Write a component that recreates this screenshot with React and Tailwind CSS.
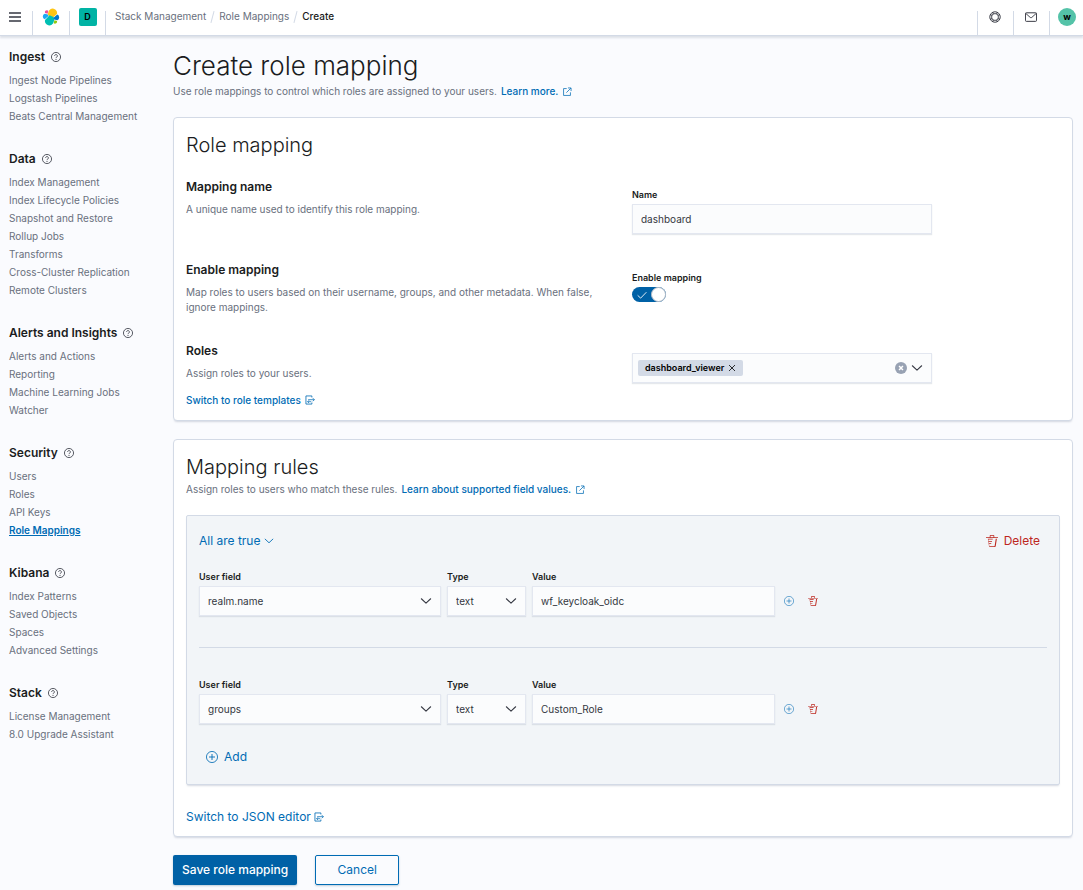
import { useState } from "react";

const NAV_SECTIONS = [
  {
    title: "Ingest",
    items: ["Ingest Node Pipelines", "Logstash Pipelines", "Beats Central Management"],
  },
  {
    title: "Data",
    items: [
      "Index Management",
      "Index Lifecycle Policies",
      "Snapshot and Restore",
      "Rollup Jobs",
      "Transforms",
      "Cross-Cluster Replication",
      "Remote Clusters",
    ],
  },
  {
    title: "Alerts and Insights",
    items: ["Alerts and Actions", "Reporting", "Machine Learning Jobs", "Watcher"],
  },
  {
    title: "Security",
    items: ["Users", "Roles", "API Keys", "Role Mappings"],
  },
  {
    title: "Kibana",
    items: ["Index Patterns", "Saved Objects", "Spaces", "Advanced Settings"],
  },
  {
    title: "Stack",
    items: ["License Management", "8.0 Upgrade Assistant"],
  },
];

function Icon({ className, children }) {
  return (
    <svg
      viewBox="0 0 16 16"
      fill="none"
      stroke="currentColor"
      aria-hidden="true"
      className={`shrink-0 ${className}`}
    >
      {children}
    </svg>
  );
}

function HelpIcon() {
  return (
    <Icon className="h-[10px] w-[10px] text-[#343741]">
      <circle cx="8" cy="8" r="7.3" strokeWidth="1.3" />
      <path d="M5.8 6.3a2.2 2.2 0 1 1 3.4 1.8c-.8.5-1.2.8-1.2 1.7" strokeWidth="1.3" />
      <path d="M8 11.2v1.5" strokeWidth="1.4" />
    </Icon>
  );
}

function PopoutIcon() {
  return (
    <Icon className="h-[10px] w-[10px]">
      <path d="M7.5 2.5H2.5v11h11v-5M9.5 1.5h5v5M14.2 1.8 7 9" strokeWidth="1.2" />
    </Icon>
  );
}

function SwitchIcon() {
  return (
    <Icon className="h-[10px] w-[10px]">
      <path d="M11 4V1.5H1.5v13H11V12" strokeWidth="1.3" />
      <path d="M5 7.5h10M12.5 5 15 7.5 12.5 10M10 10.7H4.2M6.3 8.6l-2.1 2.1 2.1 2.1" strokeWidth="1.2" />
    </Icon>
  );
}

function ChevronIcon({ className }) {
  return (
    <Icon className={className}>
      <path d="m1.8 5 6.2 5.8L14.2 5" strokeWidth="1.4" strokeLinecap="round" strokeLinejoin="round" />
    </Icon>
  );
}

function PlusCircleIcon({ className }) {
  return (
    <Icon className={className}>
      <circle cx="8" cy="8" r="7.4" strokeWidth="1.1" />
      <path d="M8 4v8M4 8h8" strokeWidth="1.2" />
    </Icon>
  );
}

function TrashIcon({ className }) {
  return (
    <Icon className={className}>
      <path
        d="M11 3h5v1H0V3h5V1a1 1 0 011-1h4a1 1 0 011 1v2zm-7.056 8H7v1H4.1l.392 2.519c.042.269.254.458.493.458h6.03c.239 0 .451-.189.493-.458l1.498-9.576H14.5l-1.504 9.73c-.116.747-.74 1.304-1.481 1.304h-6.03c-.741 0-1.365-.557-1.481-1.304l-1.511-9.73H9V5.95H3.157L3.476 8H8v1H3.632l.312 2zM6 3h4V1H6v2z"
        fill="currentColor"
        stroke="none"
      />
    </Icon>
  );
}

function ElasticLogo() {
  return (
    <svg viewBox="0 0 32 32" className="h-[18px] w-[18px]" aria-hidden="true">
      <path fill="#fec514" d="M12.6 13.7l7 3.2 7-6.2A7.8 7.8 0 0 0 11.3 6.9l-1.1 6z" />
      <path fill="#00bfb3" d="M5.4 21.3a7.8 7.8 0 0 0 15.4 3.7l1.2-6-1.6-3-7-3.2z" />
      <path fill="#f04e98" d="M5.3 9l4.8 1.1 1.1-5.4A3.8 3.8 0 0 0 5.3 9z" />
      <path fill="#1ba9f5" d="M4.9 10.1A5.4 5.4 0 0 0 4.9 20.2l6.7-6.1-1.2-2.7z" />
      <path fill="#93c90e" d="M20.9 27.3a3.8 3.8 0 0 0 5.8-4.3l-4.7-1.1z" />
      <path fill="#07c" d="M21.8 20.6l5.3 1.2a5.4 5.4 0 0 0 0-10.1l-6.9 6z" />
    </svg>
  );
}

function Header() {
  return (
    <header className="flex h-9 items-stretch border-b border-[#d3dae6] bg-white shadow-[0_2px_2px_rgba(152,162,179,0.3)]">
      <button type="button" aria-label="Toggle navigation" className="mb-0.5 flex w-8 items-center justify-center pr-0.5">
        <Icon className="h-3 w-3 text-[#343741]">
          <path d="M0 2.7h16M0 8h16M0 13.3h16" strokeWidth="1.8" />
        </Icon>
      </button>
      <div className="mt-[11px] w-px bg-[#d3dae6]" />
      <a href="#home" aria-label="Elastic home" className="mb-0.5 flex w-9 items-center justify-center">
        <ElasticLogo />
      </a>
      <div className="mt-[11px] w-px bg-[#d3dae6]" />
      <button type="button" className="mb-0.5 flex w-[35px] items-center justify-center">
        <span className="flex h-[18px] w-[18px] items-center justify-center rounded-xs bg-[#00b3a4] text-[9px] font-semibold text-black">
          D
        </span>
      </button>
      <div className="mt-[11px] w-px bg-[#d3dae6]" />
      <nav aria-label="Breadcrumb" className="mb-0.5 flex items-center gap-1.5 pl-[9px] text-[10px] text-[#69707d]">
        <a href="#stack">Stack Management</a>
        <span className="h-3 w-px rotate-15 bg-[#d3dae6]" />
        <a href="#mappings">Role Mappings</a>
        <span className="h-3 w-px rotate-15 bg-[#d3dae6]" />
        <span className="font-medium text-[#1a1c21]">Create</span>
      </nav>
      <div className="ml-auto flex">
        <div className="mt-[11px] w-px bg-[#d3dae6]" />
        <button type="button" aria-label="Help" className="mb-0.5 flex w-[35px] items-center justify-center pr-0.5">
          <Icon className="h-3 w-3 text-[#343741]">
            <circle cx="8" cy="8" r="7" strokeWidth="1.2" />
            <circle cx="8" cy="8" r="4.6" strokeWidth="1.2" />
            <path d="M5.8 4 4.9 1.4M10.2 4l.9-2.6M5.8 12l-.9 2.6M10.2 12l.9 2.6M4 5.8 1.4 4.9M4 10.2l-2.6.9M12 5.8l2.6-.9M12 10.2l2.6.9" strokeWidth="1.2" />
          </Icon>
        </button>
        <div className="mt-[11px] w-px bg-[#d3dae6]" />
        <button type="button" aria-label="News" className="mb-0.5 flex w-[35px] items-center justify-center pr-0.5">
          <Icon className="h-3 w-3 text-[#343741]">
            <rect x=".6" y="2.4" width="14.8" height="11.4" rx="1.2" strokeWidth="1.3" />
            <path d="M1 3.2 7 8.6a1.5 1.5 0 0 0 2 0l6-5.4" strokeWidth="1.2" />
          </Icon>
        </button>
        <div className="mt-[11px] w-px bg-[#d3dae6]" />
        <button type="button" aria-label="Account" className="mb-0.5 flex w-[33px] items-center pl-2">
          <span className="flex h-[18px] w-[18px] items-center justify-center rounded-full bg-[#54c3a8] text-[9px] font-bold text-black">
            w
          </span>
        </button>
      </div>
    </header>
  );
}

function SideNav() {
  return (
    <nav aria-label="Management" className="flex w-[164px] shrink-0 flex-col gap-[22px] pt-[9px]">
      {NAV_SECTIONS.map((section) => (
        <div key={section.title}>
          <h2 className="mb-0.5 flex h-6 items-center gap-1.5 text-[12px] font-semibold text-[#1a1c21]">
            {section.title}
            <HelpIcon />
          </h2>
          <ul>
            {section.items.map((item) => (
              <li key={item} className="text-[10px] leading-[18px] text-[#69707d]">
                <a
                  href="#nav"
                  className={item === "Role Mappings" ? "font-semibold text-[#006bb4] underline" : ""}
                >
                  {item}
                </a>
              </li>
            ))}
          </ul>
        </div>
      ))}
    </nav>
  );
}

function Panel({ title, children }) {
  return (
    <section className="rounded-sm border border-[#d3dae6] bg-white p-3 shadow-[0_2px_2px_-1px_rgba(152,162,179,0.4)]">
      <h2 className="text-[20px] leading-[30px] font-light text-[#1a1c21]">{title}</h2>
      {children}
    </section>
  );
}

function DescribedRow({ title, description, extra, children }) {
  return (
    <div className="grid grid-cols-2 gap-x-[18px]">
      <div>
        <h3 className="text-[12px] leading-5 font-semibold text-[#1a1c21]">{title}</h3>
        <p className="mt-[5px] text-[10px] leading-[15px] text-[#69707d]">{description}</p>
        {extra}
      </div>
      <div className="pt-3">{children}</div>
    </div>
  );
}

const labelClass = "mb-[3px] block text-[9px] leading-3 font-semibold text-[#1a1c21]";
const controlClass =
  "block h-[30px] w-full appearance-none border border-[#e3e7f0] bg-[#fbfcfd] px-2 text-[10px] text-[#343741] shadow-[0_1px_1px_rgba(152,162,179,0.25)] outline-none";

function SelectField({ id, label, value, options }) {
  return (
    <div>
      <label htmlFor={id} className={labelClass}>
        {label}
      </label>
      <div className="relative">
        <select id={id} defaultValue={value} className={controlClass}>
          {options.map((option) => (
            <option key={option}>{option}</option>
          ))}
        </select>
        <ChevronIcon className="pointer-events-none absolute top-[9px] right-[9px] h-3 w-3 text-[#343741]" />
      </div>
    </div>
  );
}

function RuleRow({ id, field, value }) {
  return (
    <div className="grid grid-cols-[242fr_79fr_243fr_266fr] items-end gap-x-1.5">
      <SelectField id={`${id}-field`} label="User field" value={field} options={["username", "dn", "groups", "realm.name"]} />
      <SelectField id={`${id}-type`} label="Type" value="text" options={["text", "number", "null", "boolean"]} />
      <div>
        <label htmlFor={`${id}-value`} className={labelClass}>
          Value
        </label>
        <input id={`${id}-value`} defaultValue={value} className={controlClass} />
      </div>
      <div className="flex h-[30px] items-center gap-3.5 pl-[3px]">
        <button type="button" aria-label="Add alternate value" className="text-[#006bb4]/80">
          <PlusCircleIcon className="h-[10px] w-[10px]" />
        </button>
        <button type="button" aria-label="Delete rule" className="text-[#bd271e]">
          <TrashIcon className="h-[10px] w-[10px]" />
        </button>
      </div>
    </div>
  );
}

export default function App() {
  const [enabled, setEnabled] = useState(true);

  return (
    <div className="min-h-screen bg-[#fafbfe] font-[Inter,sans-serif]">
      <Header />
      <div className="flex pr-2.5 pb-1 pl-[9px]">
        <SideNav />
        <main className="min-w-0 flex-1 pt-3">
          <h1 className="text-[26px] leading-9 font-light text-[#1a1c21]">Create role mapping</h1>
          <p className="flex items-center gap-1 text-[10px] leading-[15px] text-[#69707d]">
            Use role mappings to control which roles are assigned to your users.
            <a href="#docs" className="flex items-center gap-1 font-medium text-[#006bb4]">
              Learn more.
              <PopoutIcon />
            </a>
          </p>

          <form className="mt-[18px] flex flex-col gap-[18px]" onSubmit={(event) => event.preventDefault()}>
            <Panel title="Role mapping">
              <div className="mt-[17px] flex flex-col gap-[26px]">
                <DescribedRow title="Mapping name" description="A unique name used to identify this role mapping.">
                  <label htmlFor="mapping-name" className={labelClass}>
                    Name
                  </label>
                  <div className="max-w-[300px]">
                    <input id="mapping-name" defaultValue="dashboard" className={controlClass} />
                  </div>
                </DescribedRow>

                <DescribedRow
                  title="Enable mapping"
                  description="Map roles to users based on their username, groups, and other metadata. When false, ignore mappings."
                >
                  <label htmlFor="mapping-enabled" className={labelClass}>
                    Enable mapping
                  </label>
                  <button
                    id="mapping-enabled"
                    type="button"
                    role="switch"
                    aria-checked={enabled}
                    onClick={() => setEnabled(!enabled)}
                    className={`flex h-[15px] w-[34px] items-center justify-between rounded-full ${
                      enabled ? "bg-[#0061a6]" : "flex-row-reverse bg-[#98a2b3]"
                    }`}
                  >
                    <Icon className="ml-[5px] h-[10px] w-[10px] text-white">
                      <path d="m1 8.5 4.8 4.5L15 3.5" strokeWidth="1.4" />
                    </Icon>
                    <span className="h-[15px] w-[15px] rounded-full border border-[#b8bec8] bg-white" />
                  </button>
                </DescribedRow>

                <DescribedRow
                  title="Roles"
                  description="Assign roles to your users."
                  extra={
                    <button type="button" className="mt-[11px] flex items-center gap-1 text-[10px] leading-4 font-medium text-[#006bb4]">
                      Switch to role templates
                      <SwitchIcon />
                    </button>
                  }
                >
                  <div className="flex h-[30px] max-w-[300px] items-center border border-[#e3e7f0] bg-[#fbfcfd] pr-2 pl-[5px] shadow-[0_1px_1px_rgba(152,162,179,0.25)]">
                    <span className="flex h-4 items-center gap-1 rounded-xs bg-[#d3dae6] px-[7px] text-[9px] font-semibold text-black">
                      dashboard_viewer
                      <button type="button" aria-label="Remove dashboard_viewer">
                        <Icon className="h-2 w-2">
                          <path d="m2 2 12 12M14 2 2 14" strokeWidth="1.6" />
                        </Icon>
                      </button>
                    </span>
                    <input aria-label="Roles" className="min-w-0 flex-1 bg-transparent text-[10px] outline-none" />
                    <button type="button" aria-label="Clear roles">
                      <Icon className="h-3 w-3">
                        <circle cx="8" cy="8" r="8" fill="#98a2b3" stroke="none" />
                        <path d="m5.4 5.4 5.2 5.2m0-5.2-5.2 5.2" stroke="#fff" strokeWidth="2" />
                      </Icon>
                    </button>
                    <button type="button" aria-label="Open roles list" className="ml-1">
                      <ChevronIcon className="h-3 w-3 text-[#343741]" />
                    </button>
                  </div>
                </DescribedRow>
              </div>
            </Panel>

            <Panel title="Mapping rules">
              <p className="flex items-center gap-1 text-[10px] leading-[15px] text-[#69707d]">
                Assign roles to users who match these rules.
                <a href="#fields" className="flex items-center gap-1 font-medium text-[#006bb4]">
                  Learn about supported field values.
                  <PopoutIcon />
                </a>
              </p>

              <div className="mt-[18px] rounded-xs border border-[#d3dae6] bg-[#f2f5f8] p-3 shadow-[0_2px_2px_-1px_rgba(152,162,179,0.4)]">
                <div className="mb-[17px] flex h-[26px] items-center justify-between text-[12px]">
                  <button type="button" className="flex items-center gap-1 text-[#006bb4]">
                    All are true
                    <ChevronIcon className="h-[10px] w-[10px]" />
                  </button>
                  <button type="button" className="flex items-center gap-1.5 pr-[7px] text-[#bd271e]">
                    <TrashIcon className="h-3 w-3" />
                    Delete
                  </button>
                </div>
                <RuleRow id="rule-0" field="realm.name" value="wf_keycloak_oidc" />
                <hr className="my-[31px] border-[#d3dae6]" />
                <RuleRow id="rule-1" field="groups" value="Custom_Role" />
                <button
                  type="button"
                  className="mt-[18px] flex h-[30px] items-center gap-1.5 px-[7px] text-[12px] text-[#006bb4]"
                >
                  <PlusCircleIcon className="h-3 w-3" />
                  Add
                </button>
              </div>

              <button type="button" className="mt-6 flex items-center gap-[3px] text-[12px] leading-[15px] text-[#006bb4]">
                Switch to JSON editor
                <SwitchIcon />
              </button>
            </Panel>

            <div className="flex gap-[18px] text-[12px]">
              <button
                type="submit"
                className="h-[30px] rounded-xs bg-[#0061a6] px-[9px] font-medium text-white shadow-[0_1px_2px_rgba(54,97,126,0.3)]"
              >
                Save role mapping
              </button>
              <button
                type="button"
                className="h-[30px] min-w-[84px] rounded-xs border border-[#006bb4] px-2.5 text-[#006bb4] shadow-[0_1px_2px_rgba(54,97,126,0.3)]"
              >
                Cancel
              </button>
            </div>
          </form>
        </main>
      </div>
    </div>
  );
}
